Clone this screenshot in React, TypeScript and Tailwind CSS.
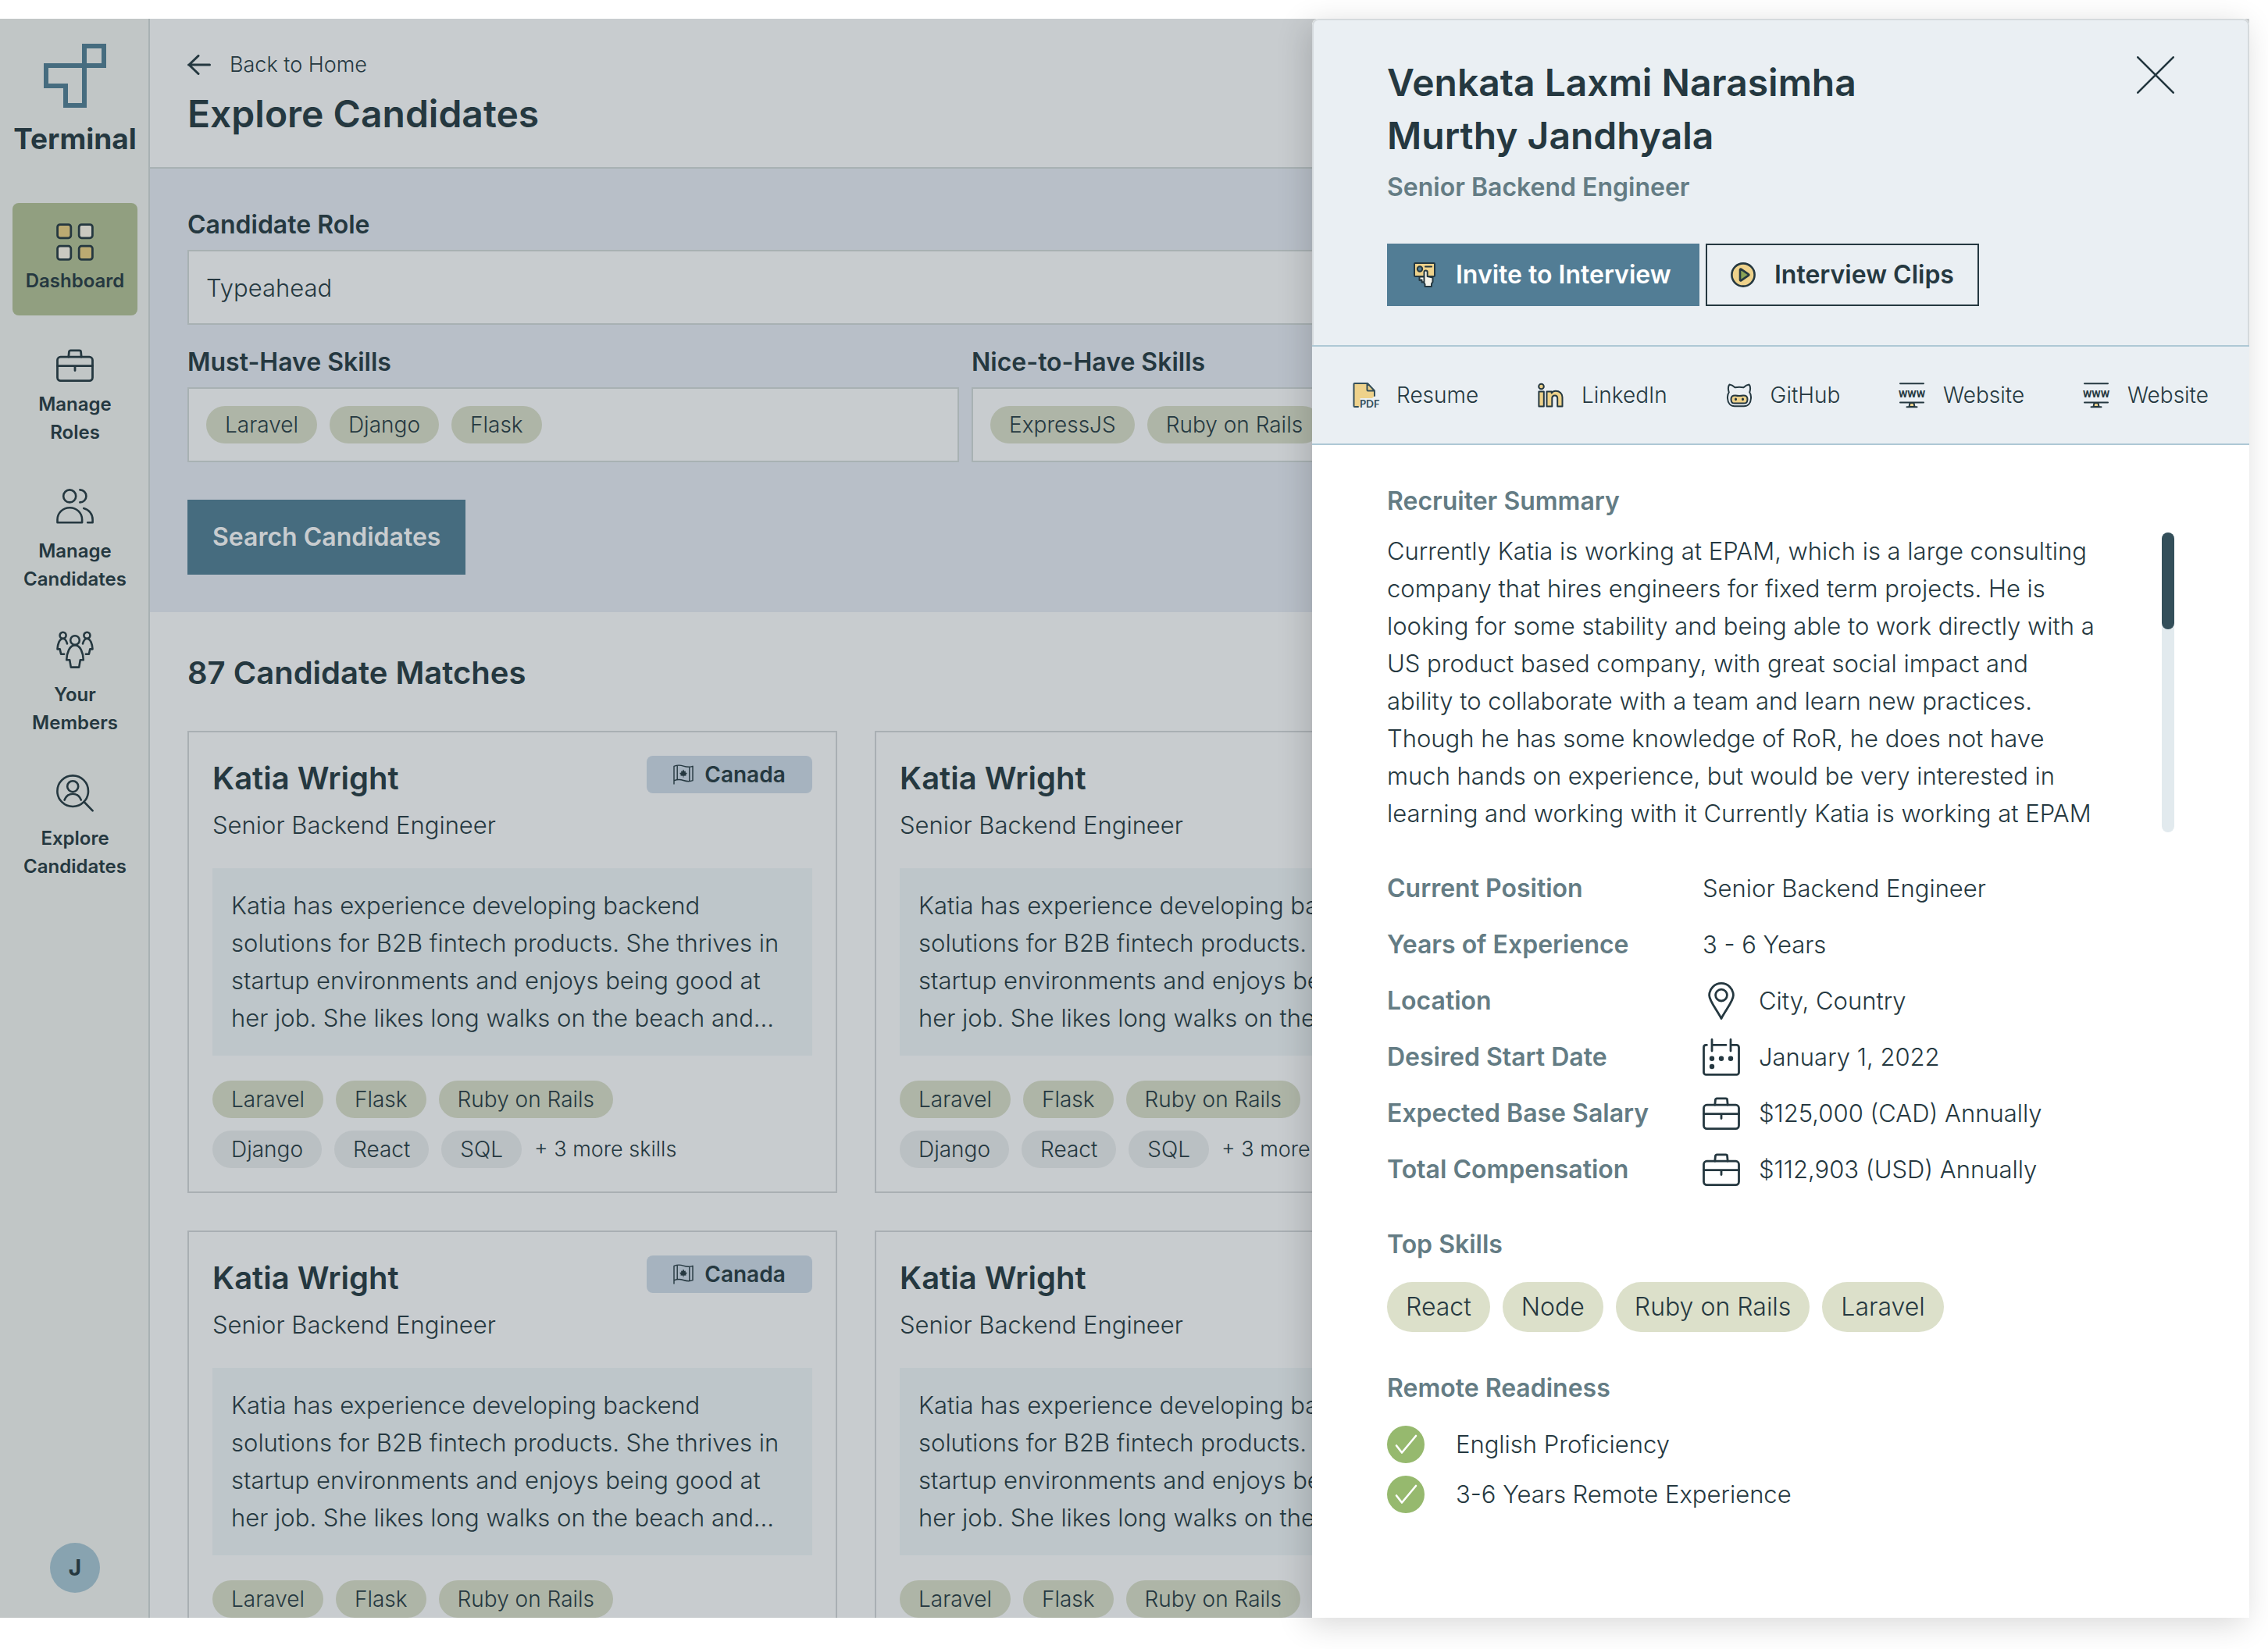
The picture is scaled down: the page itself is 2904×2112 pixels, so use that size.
import React from "react";

const INK = "#253840";
const GOLD = "#eed28b";

function Briefcase({ className }: { className: string }) {
  return (
    <svg viewBox="0 0 24 24" className={className} fill="none" stroke="currentColor" strokeWidth="1.4" strokeLinecap="round" strokeLinejoin="round" aria-hidden="true">
      <rect x=".75" y="6.6" width="22.5" height="15.2" rx="2" />
      <path d="M.75 12.3h22.5M12 12.3v3M7.9 6.6l.3-3.2a1 1 0 0 1 1-1h5.6a1 1 0 0 1 1 1l.3 3.2" />
    </svg>
  );
}

function DashboardIcon() {
  return (
    <svg viewBox="0 0 24 24" className="size-12" stroke={INK} strokeWidth="1.4" aria-hidden="true">
      <rect x=".8" y=".8" width="8.6" height="8.6" rx="1.6" fill="#bbaa72" />
      <rect x="14.6" y=".8" width="8.6" height="8.6" rx="1.6" fill="#cac9c1" />
      <rect x=".8" y="14.6" width="8.6" height="8.6" rx="1.6" fill="#cac9c1" />
      <rect x="14.6" y="14.6" width="8.6" height="8.6" rx="1.6" fill="#bbaa72" />
    </svg>
  );
}

function PeopleIcon() {
  return (
    <svg viewBox="0 0 24 24" className="size-12" fill="none" stroke="currentColor" strokeWidth="1.3" strokeLinecap="round" strokeLinejoin="round" aria-hidden="true">
      <circle cx="8.6" cy="5.7" r="4" />
      <path d="M.75 22.6v-1.8c0-4.3 3.5-7.7 7.9-7.7s7.9 3.4 7.9 7.7v1.8z" />
      <path d="M15.2 1.7a4 4 0 0 1 0 8M17.6 13.5c3.4.9 5.7 3.7 5.7 7.3v1.8h-3.2" />
    </svg>
  );
}

function MembersIcon() {
  return (
    <svg viewBox="0 0 24 24" className="size-12" fill="none" stroke="currentColor" strokeWidth="1.3" strokeLinecap="round" strokeLinejoin="round" aria-hidden="true">
      <circle cx="12" cy="6" r="2.9" />
      <path d="M6.6 18.6c.2-4.6 1.9-9.4 5.4-9.4s5.2 4.8 5.4 9.4h-2l-.8 4.7H9.4l-.8-4.7z" />
      <circle cx="4.3" cy="2.9" r="2" />
      <path d="M7 8.2C6.4 6 5.5 5 4.3 5 2 5 .9 8.6.75 11.7h1.6l.7 3.2h2" />
      <circle cx="19.7" cy="2.9" r="2" />
      <path d="M17 8.2c.6-2.2 1.5-3.2 2.7-3.2 2.3 0 3.4 3.6 3.55 6.7h-1.6l-.7 3.2h-2" />
    </svg>
  );
}

function ExploreIcon() {
  return (
    <svg viewBox="0 0 24 24" className="size-12" fill="none" stroke="currentColor" strokeWidth="1.3" strokeLinecap="round" strokeLinejoin="round" aria-hidden="true">
      <circle cx="10.6" cy="10.6" r="9.9" />
      <path d="M17.8 17.5l5.5 5.7M5.3 16.3C6.3 13.8 8.2 12.4 10.6 12.4s4.3 1.4 5.3 3.9" />
      <circle cx="10.6" cy="7.6" r="3.5" />
    </svg>
  );
}

function FlagIcon() {
  return (
    <svg viewBox="0 0 26 26" className="size-[26px]" fill="none" stroke={INK} strokeWidth="1.4" strokeLinejoin="round" strokeLinecap="round" aria-hidden="true">
      <path d="M1 25V2.4C5 .8 8.5.6 13 2.1s8.5 1.6 12 .2v18.4c-3.500 1.400-7.500 1.300-12-.2s-8-1.300-12 .3M5.200 1.600v17.900M20.800 3.400v18.200" />
      <path d="M13 6.500l1.500 2.400 1.400-.5-.2 2.200 2.100.3-1.500 2.400.3 1.200-3.200.2v2h-.8v-2l-3.200-.2.3-1.200-1.500-2.400 2.100-.3-.2-2.200 1.400.5z" fill={INK} stroke="none" />
    </svg>
  );
}

function InviteIcon() {
  return (
    <svg viewBox="0 0 32 32" className="size-8" stroke={INK} strokeWidth="2" strokeLinejoin="round" strokeLinecap="round" aria-hidden="true">
      <rect x="3" y="1" width="26" height="17" rx="1" fill={GOLD} />
      <circle cx="10" cy="8.5" r="3.2" fill="#527d95" />
      <path d="M17 5.5h8" fill="none" />
      <path d="M9.5 18.5v4.5l3-.5v3l4-.5v-6.5z" fill="#f6f5ec" />
      <path d="M15.5 26.5V12.5a2.1 2.1 0 0 1 4.2 0V18l6.8 1.5v5.5l-1.5 2.5V31h-8.5v-3z" fill="#f6f5ec" />
    </svg>
  );
}

function PlayIcon() {
  return (
    <svg viewBox="0 0 32 32" className="size-8" stroke={INK} strokeWidth="2.6" strokeLinejoin="round" aria-hidden="true">
      <circle cx="16" cy="16" r="14.6" fill={GOLD} />
      <path d="M12 9.3v13.4a.8.8 0 0 0 1.2.6l9.8-6.6a.8.8 0 0 0 0-1.4l-9.8-6.6a.8.8 0 0 0-1.2.6z" fill="#8aa356" />
    </svg>
  );
}

function ResumeIcon() {
  return (
    <svg viewBox="0 0 32 32" className="size-8 overflow-visible" stroke="#344f5a" strokeWidth="2" strokeLinejoin="round" strokeLinecap="round" aria-hidden="true">
      <path d="M2.5 1H19l9 9.5v6.5l-3 3H9.5v11h-7a1 1 0 0 1-1-1V2a1 1 0 0 1 1-1z" fill={GOLD} stroke="none" />
      <path d="M7 31H2.5a1 1 0 0 1-1-1V2a1 1 0 0 1 1-1H19l9 9.5V17M18.5 1.5v8a1 1 0 0 0 1 1H27.5" fill="none" />
      <text x="9" y="31.5" fontSize="13" fontWeight="700" fontFamily="Lato, sans-serif" fill="#344f5a" stroke="none">PDF</text>
    </svg>
  );
}

function LinkedInIcon() {
  return (
    <svg viewBox="0 0 32 32" className="size-8 overflow-visible" fill={GOLD} stroke={INK} strokeWidth="2" strokeLinejoin="round" aria-hidden="true">
      <circle cx="4.5" cy="5" r="3.3" />
      <path d="M1.4 11.4h6.4v19H1.4z" />
      <path d="M11.5 11.4h6.2v2c1-1.7 3-2.6 5.3-2.6 4.8 0 8.5 3 8.5 8v11.6h-6.3V20.2c0-2.5-1-3.7-3.2-3.7s-3.7 1.2-3.7 3.7v10.2h-6.8z" />
    </svg>
  );
}

function GitHubIcon() {
  return (
    <svg viewBox="0 0 32 32" className="size-8 overflow-visible" stroke={INK} strokeWidth="2" strokeLinejoin="round" aria-hidden="true">
      <path d="M2.8 12.5C1.5 8 2 4 3.5 2.5c2.5.2 5 1.8 7 3.8 3.5-.8 7.5-.8 11 0 2-2 4.500-3.600 7-3.800 1.500 1.500 2 5.500.7 10 1.600 2 2 4.500 1.800 7.500-.3 6.500-4 10.300-9 10.300H10c-5 0-8.700-3.800-9-10.300-.2-3 .2-5.500 1.800-7.500z" fill="none" />
      <path d="M11 16.4c3 .6 7 .6 10 0 3.5-.2 5.5 1.6 5.5 5s-1.800 5.200-4.500 5.200H10c-2.700 0-4.500-1.800-4.500-5.200s2-5.200 5.500-5z" fill={GOLD} />
      <ellipse cx="11.5" cy="21.3" rx="1.5" ry="1.9" fill={INK} stroke="none" />
      <ellipse cx="20.5" cy="21.3" rx="1.5" ry="1.9" fill={INK} stroke="none" />
    </svg>
  );
}

function WebsiteIcon() {
  return (
    <svg viewBox="0 0 32 32" className="size-8 overflow-visible" stroke={INK} strokeWidth="2" strokeLinecap="round" aria-hidden="true">
      <path d="M13.5 26h5l1 5h-7z" fill={GOLD} />
      <path d="M1 1.2h30M1 25.6h30M9.5 31.3h13" fill="none" />
      <text x="16" y="18.5" textAnchor="middle" fontSize="13" fontWeight="700" fontFamily="Roboto, sans-serif" fill={INK} stroke="none">WWW</text>
    </svg>
  );
}

function PinIcon() {
  return (
    <svg viewBox="0 0 24 24" className="size-12" fill="none" stroke="currentColor" strokeWidth="1.4" strokeLinejoin="round" aria-hidden="true">
      <path d="M12 23.25C9 17.5 4.3 12 4.3 8.4a7.7 7.7 0 0 1 15.4 0c0 3.6-4.7 9.1-7.7 14.85z" />
      <circle cx="12" cy="8.3" r="3.7" />
    </svg>
  );
}

function CalendarIcon() {
  return (
    <svg viewBox="0 0 24 24" className="size-12" fill="none" stroke="currentColor" strokeWidth="1.4" strokeLinecap="round" strokeLinejoin="round" aria-hidden="true">
      <path d="M2.7 4.2h-.5A1.5 1.5 0 0 0 .75 5.7v16a1.5 1.5 0 0 0 1.5 1.5h19.5a1.5 1.5 0 0 0 1.5-1.5v-16a1.5 1.5 0 0 0-1.5-1.5H18M6 4.2h9M6 .75V8M18 .75V8" />
      <g fill="currentColor" stroke="none">
        <circle cx="6" cy="12.9" r="1.6" />
        <circle cx="12" cy="12.9" r="1.6" />
        <circle cx="18" cy="12.9" r="1.6" />
        <circle cx="6" cy="18" r="1.6" />
      </g>
    </svg>
  );
}

function CheckIcon() {
  return (
    <svg viewBox="0 0 48 48" className="size-12" aria-hidden="true">
      <circle cx="24" cy="24" r="24" fill="#96b96e" />
      <path d="M12 25.5l7 9L37 13" fill="none" stroke="#fff" strokeWidth="2.6" strokeLinecap="round" strokeLinejoin="round" />
    </svg>
  );
}

function Chip({ children, muted = false }: { children: React.ReactNode; muted?: boolean }) {
  return (
    <li className={`flex h-12 items-center rounded-full px-6 text-[28px] font-light whitespace-nowrap ${muted ? "bg-[#bac0c3]" : "bg-[#aeb5a7]"}`}>
      {children}
    </li>
  );
}

function NavItem({ icon, label, gap }: { icon: React.ReactNode; label: React.ReactNode; gap: string }) {
  return (
    <a href="#" className={`flex w-full flex-col items-center text-center text-2xl leading-9 font-semibold ${gap}`}>
      {icon}
      <span>{label}</span>
    </a>
  );
}

function Sidebar() {
  return (
    <aside className="flex w-48 shrink-0 flex-col items-center bg-[#c1c6c6] pt-8 pb-8 shadow-[inset_-2px_0_0_#a8b1b3]">
      <svg viewBox="0 0 80 82" className="h-[82px] w-20" fill="none" stroke="#466c7f" strokeWidth="6" aria-hidden="true">
        <path d="M52 3h25v25H52zM52 28v51H28V54H3V28z" />
      </svg>
      <span className="mt-4 text-[37px] leading-12 font-bold">Terminal</span>
      <nav className="mt-[58px] flex w-full flex-col gap-12 px-4">
        <div className="flex flex-col gap-10 pb-1">
          <a href="#" className="flex flex-col items-center gap-2 rounded-lg bg-[#919f80] pt-[26px] pb-[26px] text-2xl leading-9 font-semibold">
            <DashboardIcon />
            <span>Dashboard</span>
          </a>
          <NavItem icon={<Briefcase className="size-12" />} label={<>Manage<br />Roles</>} gap="gap-2" />
        </div>
        <NavItem icon={<PeopleIcon />} label={<>Manage<br />Candidates</>} gap="gap-4" />
        <NavItem icon={<MembersIcon />} label={<>Your<br />Members</>} gap="gap-4" />
        <NavItem icon={<ExploreIcon />} label={<>Explore<br />Candidates</>} gap="gap-4" />
      </nav>
      <button className="mt-auto flex size-16 items-center justify-center rounded-full bg-[#88a3b0] text-[28px] font-bold">J</button>
    </aside>
  );
}

function SkillBox({ id, label, skills }: { id: string; label: string; skills: string[] }) {
  return (
    <div className="flex min-w-0 flex-col gap-2">
      <label htmlFor={id} className="text-[32px] leading-12 font-semibold">{label}</label>
      <div className="flex h-24 items-center gap-4 border-2 border-[#a8b1b3] bg-[#c8cccf] px-[22px]">
        <ul className="flex gap-4">
          {skills.map((s) => <Chip key={s}>{s}</Chip>)}
        </ul>
        <input id={id} type="text" className="min-w-0 flex-1 bg-transparent text-[31px] font-[350] outline-none" />
      </div>
    </div>
  );
}

function CandidateCard() {
  return (
    <article className="border-2 border-[#a9afb3] p-[30px]">
      <div className="flex items-start justify-between">
        <div>
          <h3 className="text-[40px] leading-[58px] font-semibold">Katia Wright</h3>
          <p className="mt-2 text-[31px] leading-[46px] font-[350]">Senior Backend Engineer</p>
        </div>
        <span className="flex h-12 w-[212px] items-center justify-center gap-[14px] rounded-lg bg-[#a6b3bf] text-[28px] font-semibold">
          <FlagIcon />
          Canada
        </span>
      </div>
      <p className="mt-8 bg-[#bec6ca] p-6 text-[31px] leading-12 font-[350] whitespace-nowrap">
        Katia has experience developing backend<br />
        solutions for B2B fintech products. She thrives in<br />
        startup environments and enjoys being good at<br />
        her job. She likes long walks on the beach and...
      </p>
      <ul className="mt-8 flex gap-4">
        <Chip>Laravel</Chip>
        <Chip>Flask</Chip>
        <Chip>Ruby on Rails</Chip>
      </ul>
      <ul className="mt-4 flex gap-4">
        <Chip muted>Django</Chip>
        <Chip muted>React</Chip>
        <Chip muted>SQL</Chip>
        <li className="text-[27px] leading-12 font-[350] whitespace-nowrap">+ 3 more skills</li>
      </ul>
    </article>
  );
}

function MainArea() {
  return (
    <main className="min-w-0 flex-1 overflow-hidden bg-[#c8cccf]">
      <header className="border-b-2 border-[#a8b1b3] px-12 pt-[38px] pb-[34px]">
        <a href="#" className="flex w-fit items-center gap-6 text-[27px] leading-[42px] font-[350]">
          <svg viewBox="0 0 30 26" className="h-[26px] w-[30px]" fill="none" stroke="currentColor" strokeWidth="3" strokeLinecap="round" strokeLinejoin="round" aria-hidden="true">
            <path d="M28.5 13h-27M14 1.5L2 13l12 11.5" />
          </svg>
          Back to Home
        </a>
        <h1 className="mt-2 text-5xl leading-[68px] font-semibold">Explore Candidates</h1>
      </header>
      <section className="bg-[#b8bfc8] px-12 py-12">
        <div className="flex flex-col gap-2">
          <label htmlFor="role" className="text-[32px] leading-12 font-semibold">Candidate Role</label>
          <input id="role" type="text" defaultValue="Typeahead" className="h-24 border-2 border-[#a8b1b3] bg-[#c8cccf] px-[22px] text-[31px] font-[350] outline-none" />
        </div>
        <div className="mt-6 grid grid-cols-2 gap-4 pr-[600px]">
          <SkillBox id="must" label="Must-Have Skills" skills={["Laravel", "Django", "Flask"]} />
          <SkillBox id="nice" label="Nice-to-Have Skills" skills={["ExpressJS", "Ruby on Rails"]} />
        </div>
        <button className="mt-12 h-24 bg-[#466c7f] px-8 text-[32px] font-semibold text-[#c8cccf]">Search Candidates</button>
      </section>
      <section className="px-12 pt-12">
        <h2 className="text-[40px] leading-[60px] font-semibold">87 Candidate Matches</h2>
        <div className="mt-11 grid grid-cols-3 gap-12">
          {[0, 1, 2, 3, 4, 5].map((i) => <CandidateCard key={i} />)}
        </div>
      </section>
    </main>
  );
}

const links = [
  { icon: <ResumeIcon />, label: "Resume" },
  { icon: <LinkedInIcon />, label: "LinkedIn" },
  { icon: <GitHubIcon />, label: "GitHub" },
  { icon: <WebsiteIcon />, label: "Website" },
  { icon: <WebsiteIcon />, label: "Website" },
];

const facts: { label: string; icon?: React.ReactNode; value: string }[] = [
  { label: "Current Position", value: "Senior Backend Engineer" },
  { label: "Years of Experience", value: "3 - 6 Years" },
  { label: "Location", icon: <PinIcon />, value: "City, Country" },
  { label: "Desired Start Date", icon: <CalendarIcon />, value: "January 1, 2022" },
  { label: "Expected Base Salary", icon: <Briefcase className="size-12" />, value: "$125,000 (CAD) Annually" },
  { label: "Total Compensation", icon: <Briefcase className="size-12" />, value: "$112,903 (USD) Annually" },
];

function SectionTitle({ children }: { children: React.ReactNode }) {
  return <h3 className="text-[32px] leading-12 font-semibold text-[#647c84]">{children}</h3>;
}

function Drawer() {
  return (
    <div role="dialog" aria-labelledby="candidate-name" className="absolute inset-y-0 right-0 flex w-[1200px] flex-col overflow-hidden rounded-t-lg bg-white shadow-[-6px_8px_40px_rgba(0,0,0,0.16)]">
      <header className="flex items-start justify-between rounded-t-lg border-x-2 border-t-2 border-[#d5dadd] bg-[#eaeff3] px-[94px] pt-[46px] pb-[50px]">
        <div>
          <h2 id="candidate-name" className="text-5xl leading-[68px] font-semibold">Venkata Laxmi Narasimha<br />Murthy Jandhyala</h2>
          <p className="mt-2 text-[32px] leading-12 font-semibold text-[#647c84]">Senior Backend Engineer</p>
          <div className="mt-12 flex gap-2">
            <button className="flex h-20 min-w-[400px] items-center gap-6 bg-[#527d95] px-8 text-[32px] font-semibold text-white">
              <InviteIcon />
              Invite to Interview
            </button>
            <button className="flex h-20 items-center gap-6 border-2 border-[#253840] px-[30px] text-[32px] font-semibold">
              <PlayIcon />
              Interview Clips
            </button>
          </div>
        </div>
        <button aria-label="Close">
          <svg viewBox="0 0 48 48" className="size-12" fill="none" stroke="currentColor" strokeWidth="2.6" strokeLinecap="round" aria-hidden="true">
            <path d="M1.3 1.3l45.4 45.4M46.7 1.3L1.3 46.7" />
          </svg>
        </button>
      </header>
      <nav className="flex h-32 shrink-0 items-center justify-between border-y-2 border-[#aec8d5] bg-[#eaeff3] px-[52px] text-[28px] font-light">
        {links.map((l, i) => (
          <a key={i} href="#" className="flex items-center gap-6">
            {l.icon}
            {l.label}
          </a>
        ))}
      </nav>
      <div className="flex flex-col gap-12 px-24 pt-12 text-[31px] leading-12 font-[350]">
        <section>
          <SectionTitle>Recruiter Summary</SectionTitle>
          <div className="mt-4 flex justify-between">
            <p className="h-96 overflow-hidden whitespace-nowrap">
              Currently Katia is working at EPAM, which is a large consulting<br />
              company that hires engineers for fixed term projects. He is<br />
              looking for some stability and being able to work directly with a<br />
              US product based company, with great social impact and<br />
              ability to collaborate with a team and learn new practices.<br />
              Though he has some knowledge of RoR, he does not have<br />
              much hands on experience, but would be very interested in<br />
              learning and working with it Currently Katia is working at EPAM
            </p>
            <div className="w-4 shrink-0 rounded-full bg-[#e2eaee]">
              <div className="h-[124px] rounded-full bg-[#344f5a]" />
            </div>
          </div>
        </section>
        <dl className="flex flex-col gap-6">
          {facts.map((f) => (
            <div key={f.label} className="flex">
              <dt className="w-[404px] text-[32px] font-semibold text-[#647c84]">{f.label}</dt>
              <dd className="flex gap-6">
                {f.icon}
                {f.value}
              </dd>
            </div>
          ))}
        </dl>
        <section>
          <SectionTitle>Top Skills</SectionTitle>
          <ul className="mt-6 flex gap-4">
            {["React", "Node", "Ruby on Rails", "Laravel"].map((s) => (
              <li key={s} className="flex h-16 items-center rounded-full bg-[#dce0ca] px-6 text-[32px] font-light">{s}</li>
            ))}
          </ul>
        </section>
        <section>
          <SectionTitle>Remote Readiness</SectionTitle>
          <ul className="mt-6 flex flex-col gap-4">
            {["English Proficiency", "3-6 Years Remote Experience"].map((s) => (
              <li key={s} className="flex gap-10">
                <CheckIcon />
                {s}
              </li>
            ))}
          </ul>
        </section>
      </div>
    </div>
  );
}

export default function App() {
  return (
    <div className="h-screen overflow-hidden bg-white pt-6 pr-6 pb-10 font-['Inter',sans-serif] text-[#253840]">
      <div className="relative flex h-full">
        <Sidebar />
        <MainArea />
        <Drawer />
      </div>
    </div>
  );
}
